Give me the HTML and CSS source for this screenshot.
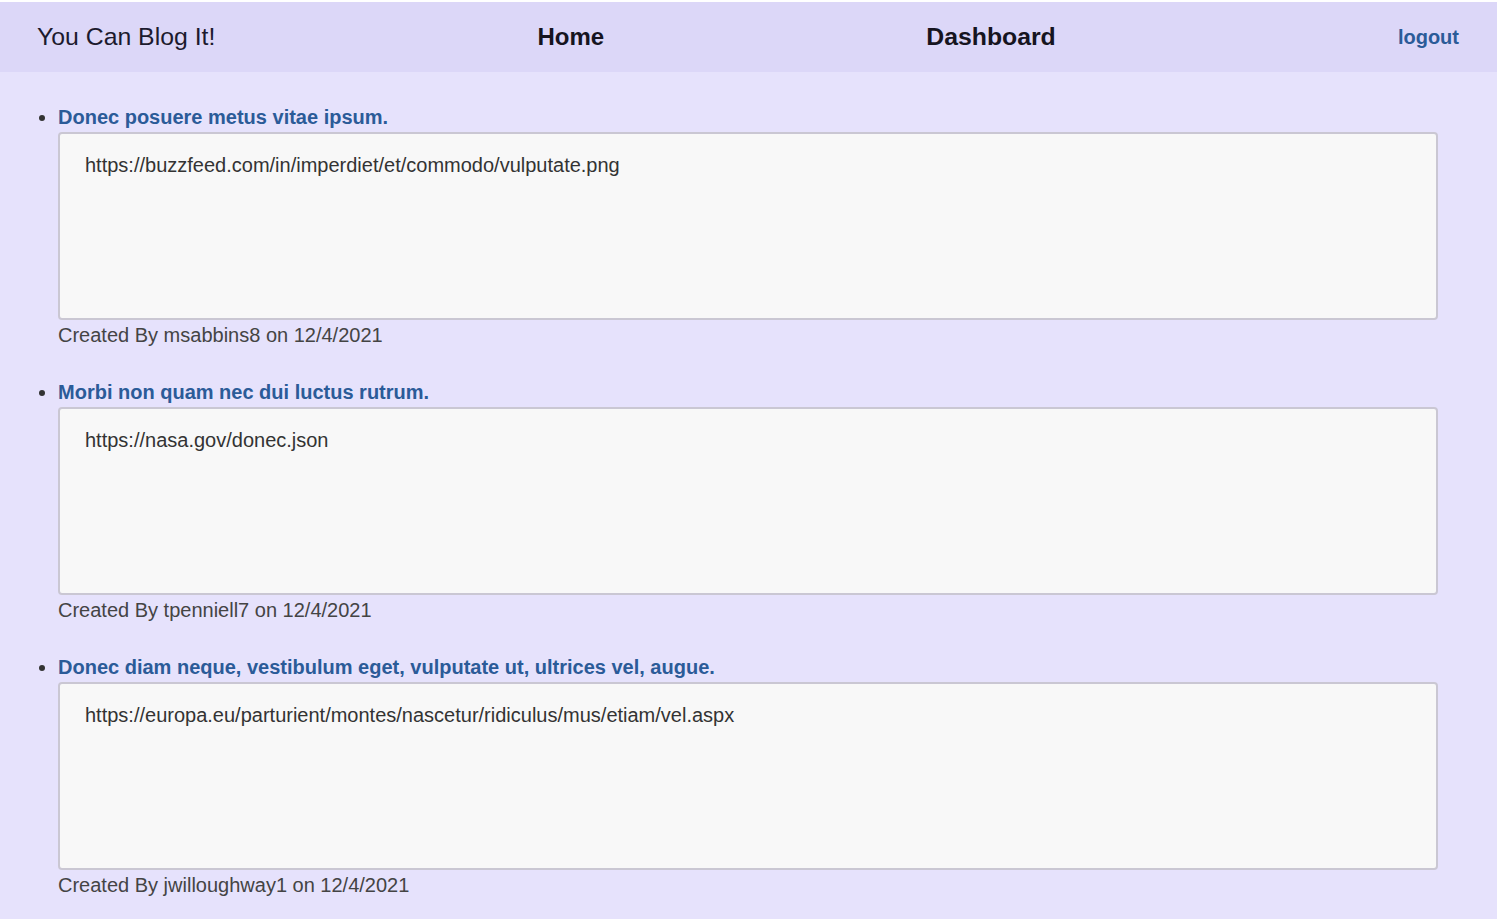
FILE: index.html
```html
<!DOCTYPE html>
<html lang="en">
<head>
<meta charset="utf-8">
<title>You Can Blog It!</title>
<link rel="stylesheet" href="styles.css">
</head>
<body>
<div class="page">
  <header class="topbar">
    <div class="brand">You Can Blog It!</div>
    <a class="nav-link" href="#">Home</a>
    <a class="nav-link" href="#">Dashboard</a>
    <a class="logout" href="#">logout</a>
  </header>
  <main class="content">
    <ul class="posts">
      <li class="post">
        <a class="post-title" href="#">Donec posuere metus vitae ipsum.</a>
        <div class="post-body">https://buzzfeed.com/in/imperdiet/et/commodo/vulputate.png</div>
        <div class="post-meta">Created By msabbins8 on 12/4/2021</div>
      </li>
      <li class="post">
        <a class="post-title" href="#">Morbi non quam nec dui luctus rutrum.</a>
        <div class="post-body">https://nasa.gov/donec.json</div>
        <div class="post-meta">Created By tpenniell7 on 12/4/2021</div>
      </li>
      <li class="post">
        <a class="post-title" href="#">Donec diam neque, vestibulum eget, vulputate ut, ultrices vel, augue.</a>
        <div class="post-body">https://europa.eu/parturient/montes/nascetur/ridiculus/mus/etiam/vel.aspx</div>
        <div class="post-meta">Created By jwilloughway1 on 12/4/2021</div>
      </li>
    </ul>
  </main>
</div>
</body>
</html>
```

FILE: styles.css
```css
html, body {
  margin: 0;
  padding: 0;
  background: #ffffff;
}

body {
  font-family: "Liberation Sans", Arial, sans-serif;
  color: #222;
}

.page {
  width: 1497px;
  min-height: calc(100vh - 2px);
  margin-top: 2px;
  background: #e6e2fc;
  display: flex;
  flex-direction: column;
}

.topbar {
  height: 70px;
  background: #dcd7f8;
  display: flex;
  align-items: center;
  justify-content: space-between;
  padding: 0 38px 0 37px;
  box-sizing: border-box;
}

.brand {
  font-size: 24.8px;
  color: #1c1a2e;
}

.nav-link {
  font-size: 24px;
  font-weight: bold;
  color: #16141f;
  text-decoration: none;
}

.nav-link + .nav-link {
  font-size: 24.8px;
}

.logout {
  font-size: 20px;
  font-weight: bold;
  color: #2b5b98;
  text-decoration: none;
  padding-left: 20px;
}

.content {
  flex: 1;
  padding-top: 34px;
}

.posts {
  margin: 0;
  padding: 0 59px 0 58px;
}

.post {
  margin-bottom: 34px;
  font-size: 20px;
  line-height: 23px;
}

.post::marker {
  color: #333;
}

.post-title {
  font-weight: bold;
  color: #2b5b98;
  text-decoration: none;
}

.post-body {
  margin-top: 3px;
  height: 188px;
  box-sizing: border-box;
  border: 2px solid #cac7d3;
  border-radius: 4px;
  background: #f8f8f8;
  padding: 20px 25px;
  color: #333;
}

.post-meta {
  margin-top: 4px;
  color: #444;
}
```
